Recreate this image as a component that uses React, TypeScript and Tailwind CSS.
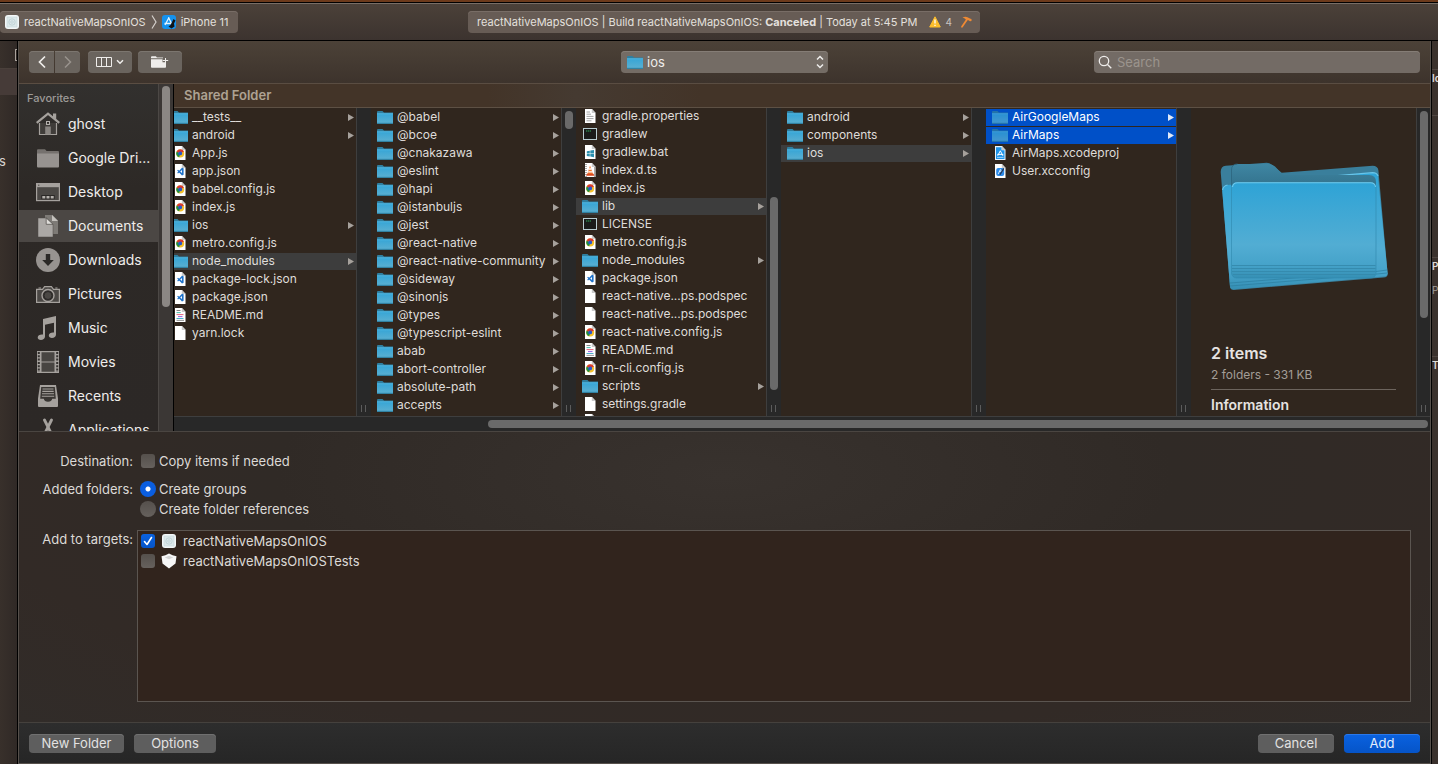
import type { ReactNode } from "react";
import { clsx } from "clsx";

type Kind =
  | "folder"
  | "chrome"
  | "code"
  | "text"
  | "plain"
  | "props"
  | "exec"
  | "windows"
  | "media"
  | "xcode"
  | "config";

type Entry = { name: string; kind: Kind; state?: "open" | "selected" };

const f = (name: string, kind: Kind = "folder", state?: Entry["state"]): Entry => ({ name, kind, state });

const rootFiles: Entry[] = [
  f("__tests__"),
  f("android"),
  f("App.js", "chrome"),
  f("app.json", "code"),
  f("babel.config.js", "chrome"),
  f("index.js", "chrome"),
  f("ios"),
  f("metro.config.js", "chrome"),
  f("node_modules", "folder", "open"),
  f("package-lock.json", "code"),
  f("package.json", "code"),
  f("README.md", "text"),
  f("yarn.lock", "plain"),
];

const moduleFiles: Entry[] = [
  "@babel",
  "@bcoe",
  "@cnakazawa",
  "@eslint",
  "@hapi",
  "@istanbuljs",
  "@jest",
  "@react-native",
  "@react-native-community",
  "@sideway",
  "@sinonjs",
  "@types",
  "@typescript-eslint",
  "abab",
  "abort-controller",
  "absolute-path",
  "accepts",
].map((name) => f(name));

const mapsFiles: Entry[] = [
  f("gradle.properties", "props"),
  f("gradlew", "exec"),
  f("gradlew.bat", "windows"),
  f("index.d.ts", "media"),
  f("index.js", "chrome"),
  f("lib", "folder", "open"),
  f("LICENSE", "exec"),
  f("metro.config.js", "chrome"),
  f("node_modules"),
  f("package.json", "code"),
  f("react-native...ps.podspec", "plain"),
  f("react-native...ps.podspec", "plain"),
  f("react-native.config.js", "chrome"),
  f("README.md", "text"),
  f("rn-cli.config.js", "chrome"),
  f("scripts"),
  f("settings.gradle", "plain"),
];

const libFiles: Entry[] = [f("android"), f("components"), f("ios", "folder", "open")];

const iosFiles: Entry[] = [
  f("AirGoogleMaps", "folder", "selected"),
  f("AirMaps", "folder", "selected"),
  f("AirMaps.xcodeproj", "xcode"),
  f("User.xcconfig", "config"),
];

function FolderIcon({ dim = false }: { dim?: boolean }) {
  return (
    <svg viewBox="0 0 16 16" className={clsx("size-4 shrink-0", dim && "opacity-75")} aria-hidden="true">
      <defs>
        <linearGradient id="folderFace" x1="0" y1="0" x2="0" y2="1">
          <stop offset="0" stopColor="#36a5d6" />
          <stop offset="0.8" stopColor="#55aed2" />
          <stop offset="1" stopColor="#3d93b6" />
        </linearGradient>
      </defs>
      <path d="M0 3q0-1 1-1h4.5l1.500 1.500h9V6H0z" fill="#2f7fa0" />
      <path d="M0 4.500h16V15H0z" fill="url(#folderFace)" />
      <path d="M0 4.500h16v.7H0z" fill="#5cc0e8" />
      <path d="M0 14.200h16v.8H0z" fill="#2f7c9b" />
    </svg>
  );
}

function Page({ children, fill = "#ffffff" }: { children?: ReactNode; fill?: string }) {
  return (
    <svg viewBox="0 0 16 16" className="size-4 shrink-0" aria-hidden="true">
      <path d="M3 1h7l3.500 3.800V15H3z" fill={fill} />
      <path d="M9.800 1v4h3.700z" fill="#c9c9c9" />
      {children}
    </svg>
  );
}

function FileIcon({ kind, dim }: { kind: Kind; dim: boolean }) {
  switch (kind) {
    case "folder":
      return <FolderIcon dim={dim} />;
    case "chrome":
      return (
        <Page>
          <circle cx="8.200" cy="8.400" r="4" fill="#f5c12a" />
          <path d="M8.200 8.400 7.200 12.300A4 4 0 0 1 4.700 6.500z" fill="#1f8f45" />
          <path d="M8.200 8.400 4.700 6.500a4 4 0 0 1 7.200.1z" fill="#d93a2e" />
          <circle cx="8.200" cy="8.400" r="1.900" fill="#2558cf" />
        </Page>
      );
    case "code":
      return (
        <Page>
          <path d="M11.600 5.200v6.600L10 12.400 5.200 7.400l.8-.7 4 3.200V7l-4 3.400-.8-.7L10 4.700z" fill="#1f72c9" />
        </Page>
      );
    case "text":
      return (
        <Page>
          <path d="M4.500 3.500h4" stroke="#777" strokeWidth=".9" />
          <path d="M4.500 5.600h4.200" stroke="#38b5a6" strokeWidth=".9" />
          <path d="M4.500 7.600h7" stroke="#e0516a" strokeWidth=".9" />
          <path d="M6 9.600h4.500" stroke="#8a4fe0" strokeWidth=".9" />
          <path d="M4.500 11.500h7" stroke="#38a5c6" strokeWidth=".9" />
          <path d="M4.500 13.400h7.500" stroke="#888" strokeWidth=".9" />
        </Page>
      );
    case "props":
      return (
        <Page>
          <path d="M4.500 4h3.500M4.500 6.200h4.500M4.500 8.400h7M4.500 10.600h7M4.500 12.800h5" stroke="#9a9a9a" strokeWidth=".9" />
        </Page>
      );
    case "windows":
      return (
        <Page>
          <path d="m4.800 7.200 3-.5v2.600h-3zM8.300 6.600l3.700-.6v3.300H8.300zM4.800 9.800h3v2.700l-3-.5zM8.300 9.800H12v3.400l-3.700-.6z" fill="#2a8fae" />
        </Page>
      );
    case "media":
      return (
        <Page>
          <path d="M4 2v13M12.500 5.500V15" stroke="#555" strokeWidth="1" strokeDasharray="1 1" />
          <path d="M8 3.500 5.400 12h5.600z" fill="#f0742b" />
          <path d="M7.200 6.300h2l.4 1.400H6.800zM6.300 9.200h3.900l.4 1.200H6z" fill="#fff" />
          <path d="M4.800 11.800h6.800l.6 2H4.200z" fill="#d9481d" />
        </Page>
      );
    case "xcode":
      return (
        <Page fill="#e8f5ff">
          <path d="M4 2.200h5.500v3h3V14H4z" fill="#1f95ea" />
          <path d="m8.300 5.800-2.600 5M8.300 5.800l2.600 5M5.300 9.400h6" stroke="#fff" strokeWidth="1" fill="none" />
          <path d="M5 12.400h6.500" stroke="#bfe3ff" strokeWidth=".8" />
        </Page>
      );
    case "config":
      return (
        <Page>
          <rect x="4.200" y="5" width="8" height="8" rx="2" fill="#2c8bea" />
          <path d="m6.200 11 2.200-4.600M7 8.400h3.500M8.400 6.400l1 2" stroke="#dff0ff" strokeWidth=".9" />
          <path d="m7.300 11.600 4-6.600 1.200.7-4 6.400z" fill="#20385c" />
        </Page>
      );
    case "exec":
      return (
        <svg viewBox="0 0 16 16" className="size-4 shrink-0" aria-hidden="true">
          <rect x="1" y="2" width="14" height="12" fill="#b9cdd2" />
          <rect x="2" y="3" width="12" height="10" fill="#1a1b1a" />
          <path d="M4 5h5" stroke="#2fae5c" strokeWidth="1" strokeDasharray="1.400 .6" />
        </svg>
      );
    default:
      return <Page />;
  }
}

function FileRow({ entry }: { entry: Entry }) {
  const selected = entry.state === "selected";
  return (
    <li className="pt-px">
      <button
        type="button"
        className={clsx(
          "flex h-[17px] w-full items-start gap-1 pr-0.5 pl-1.5 text-left text-xs leading-4 whitespace-nowrap",
          selected && "bg-[#0050c8] text-white",
          entry.state === "open" && "bg-[#3d3d3d] text-[#dfdddb]",
          !entry.state && "text-[#dfdcd9]",
        )}
      >
        <FileIcon kind={entry.kind} dim={selected} />
        <span className="flex-1">{entry.name}</span>
        {entry.kind === "folder" && (
          <svg
            viewBox="0 0 6 7"
            className={clsx("h-[7px] w-1.5 self-center", selected ? "text-[#dfe8f8]" : "text-[#a6a19c]")}
            aria-hidden="true"
          >
            <path d="M0 0v7l6-3.500z" fill="currentColor" />
          </svg>
        )}
      </button>
    </li>
  );
}

function Gutter({ thumb, last = false }: { thumb?: string; last?: boolean }) {
  return (
    <div
      className={clsx(
        "flex shrink-0 flex-col border-l border-[#3e3e3e] bg-[#282828] pt-[3px] pb-1 pl-[3px]",
        last ? "w-3.5" : "w-[15px]",
      )}
    >
      <div className="flex-1">{thumb && <div className={clsx("w-2 rounded-full bg-[#6a6a6a]", thumb)} />}</div>
      <div className="ml-px h-[7px] w-[5px] border-x border-[#5c5c5c]" />
    </div>
  );
}

type ColumnProps = { label: string; entries: Entry[]; thumb?: string; scrolled?: boolean };

function Column({ label, entries, thumb, scrolled = false }: ColumnProps) {
  return (
    <div className="flex w-[205px] shrink-0">
      <div className="flex-1 overflow-hidden">
        <ul aria-label={label} className={clsx(scrolled && "-mt-px")}>
          {entries.map((entry, i) => (
            <FileRow key={i} entry={entry} />
          ))}
          {scrolled && (
            <li className="pl-1.5">
              <Page />
            </li>
          )}
        </ul>
      </div>
      <Gutter thumb={thumb} />
    </div>
  );
}

const sidebarIcons: Record<string, ReactNode> = {
  ghost: (
    <>
      <path d="M3.500 11v11.500h17V11" fill="#403d3a" stroke="#a5a19d" strokeWidth="1.200" />
      <path d="M17 1.500h3.200v6.200L17 5z" fill="#a5a19d" />
      <path d="M.7 10.800 12 1.600l11.300 9.200" fill="none" stroke="#a5a19d" strokeWidth="2.200" />
      <rect x="10.500" y="9.500" width="3" height="3" fill="none" stroke="#b5b1ad" />
      <path d="M9.200 14.500h5.600v8H9.200z" fill="#8a8682" />
    </>
  ),
  "Google Dri...": (
    <>
      <path d="M1 4.300q0-1 1-1h7l1.600 1.700H22q1 0 1 1V8H1z" fill="#75716e" />
      <path d="M1 7.500h22v13q0 1-1 1H2q-1 0-1-1z" fill="#979390" />
    </>
  ),
  Desktop: (
    <>
      <rect x=".6" y="3.600" width="22.800" height="17" fill="#4b4845" stroke="#a5a19d" strokeWidth="1.200" />
      <path d="M.6 3.400h22.800v3.800H.6z" fill="#a5a19d" />
      <path d="M2 5.200h1.400" stroke="#4b4845" />
      <path d="M5.300 15h13.400v4.200H5.300z" fill="#2a2826" />
      <path d="M6.300 16h3v2.600h-3zM10.500 16h3v2.600h-3zM14.700 16h3v2.600h-3z" fill="#b5b1ad" />
    </>
  ),
  Documents: (
    <>
      <path d="M9 1h7.500L22 6.500V20H9z" fill="#7d7a76" />
      <path d="M16 1v6h6z" fill="#c4c1bd" />
      <path d="M2 4h8.500L17 10v13H2z" fill="#aba8a5" stroke="#4d4a46" strokeWidth=".5" />
      <path d="M10.200 4v6.300H17z" fill="#dddbd8" stroke="#4d4a46" strokeWidth=".7" />
    </>
  ),
  Downloads: (
    <>
      <circle cx="12" cy="12" r="12" fill="#979390" />
      <path d="M9.800 6h4.400v6h3.600L12 18 6.200 12h3.600z" fill="#2b2927" />
    </>
  ),
  Pictures: (
    <>
      <path d="M.6 7.400h5.900L8.600 4.600h6.800l2.100 2.800h5.900v13H.6z" fill="#4b4845" stroke="#a5a19d" strokeWidth="1.200" />
      <path d="M2.500 6h2.600M19.300 6h2.200" stroke="#a5a19d" strokeWidth="1.200" />
      <circle cx="12" cy="13.500" r="6" fill="#34312f" stroke="#a5a19d" strokeWidth="1.400" />
      <circle cx="12" cy="13.500" r="4" fill="#4a4744" stroke="#2a2826" />
    </>
  ),
  Music: (
    <path
      d="M7 3 20 0v18.500c0 2.200-1.800 3.500-4 3.500-1.900 0-3.200-.9-3.200-2.400 0-2.300 2.400-3.300 5.200-3V6.800L9 8.800V20.500C9 22.800 7 24 4.900 24 3 24 1.700 23 1.700 21.600c0-2.300 2.300-3.300 5.300-3z"
      fill="#a5a19d"
    />
  ),
  Movies: (
    <>
      <path d="M1 1h22v22H1z" fill="#a5a19d" />
      <path d="M5.500 2.200h13v9.200h-13zM5.500 12.600h13v9.200h-13z" fill="#484542" />
      <path d="M2.800 2v20M21.200 2v20" stroke="#34312f" strokeWidth="2" strokeDasharray="2 1.300" />
    </>
  ),
  Recents: (
    <>
      <path d="M4 1h16l2 13.500V22q0 1-1 1H3q-1 0-1-1v-7.500z" fill="#a5a19d" />
      <path d="M5.200 3h13.600l1 11.800h-3.600q-.5 3-4.200 3t-4.200-3H4.200z" fill="#393633" />
      <path d="M6.500 5h11M6.300 7.400h11.400M6 9.800h12M5.800 12.200h12.400" stroke="#a5a19d" strokeWidth="1.100" />
    </>
  ),
  Applications: (
    <>
      <path d="M8.500 2 19 23" stroke="#a5a19d" strokeWidth="2.800" strokeLinecap="round" />
      <path d="M15.500 2 5 23" stroke="#a5a19d" strokeWidth="2.800" strokeLinecap="round" />
      <path d="M2 17.500h20" stroke="#a5a19d" strokeWidth="2.500" />
    </>
  ),
};

function Sidebar() {
  return (
    <aside className="flex w-[155px] shrink-0 border-r border-black bg-[linear-gradient(180deg,#32302e,#2d2926_30%,#2c2826)]">
      <nav className="flex-1 overflow-hidden" aria-label="Favorites">
        <h2 className="flex h-[23px] items-end px-2 pb-px text-[11px] leading-4 font-medium text-[#9d9a97]">Favorites</h2>
        <ul>
          {Object.entries(sidebarIcons).map(([name, icon]) => (
            <li key={name} className="py-px">
              <button
                type="button"
                className={clsx(
                  "flex h-8 w-full items-center gap-2 pl-[17px] text-left text-sm whitespace-nowrap text-[#efedeb]",
                  name === "Documents" && "bg-[#4b4744]",
                )}
              >
                <svg viewBox="0 0 24 24" className="size-6 shrink-0" aria-hidden="true">
                  {icon}
                </svg>
                {name}
              </button>
            </li>
          ))}
        </ul>
      </nav>
      <div className="w-[15px] border-l border-[#4c4845] bg-[#3b3735] px-[3px] pt-0.5">
        <div className="h-[221px] w-2 rounded-full bg-[#8b8784]" />
      </div>
    </aside>
  );
}

function FolderStack() {
  return (
    <svg viewBox="0 0 170 130" className="h-[130px] w-[170px]" aria-hidden="true">
      <defs>
        <linearGradient id="stackFace" x1="0" y1="0" x2="0" y2="1">
          <stop offset="0" stopColor="#2ea3d6" />
          <stop offset="0.65" stopColor="#52add3" />
          <stop offset="0.86" stopColor="#46a3ca" />
          <stop offset="1" stopColor="#358fb4" />
        </linearGradient>
        <linearGradient id="stackTab" x1="0" y1="0" x2="0" y2="1">
          <stop offset="0" stopColor="#3f86a3" />
          <stop offset="1" stopColor="#32718b" />
        </linearGradient>
      </defs>
      <path
        d="M1.700 10q0-5.700 5-6.300l41-3q3 0 5 2l10 8 91-7q5 0 5.700 4.500l9.300 104q0 3-4 3.400l-150 12.300q-3.200 0-3.700-3z"
        fill="#3a7f9c"
      />
      <path
        d="M3.300 29q0-5 5-6l145-12.300q5 0 5.700 4.500l9.600 96q0 3-4 3.400l-150 12.700q-3.200 0-3.600-3z"
        fill="url(#stackFace)"
      />
      <path d="M3.600 28q.5-4 4.900-5M64 18.300l89.500-7.600q4.500 0 5.500 3.500" fill="none" stroke="#68c5ea" strokeWidth="1.200" />
      <path d="m11 121 146-11.500 11-1.500M11 124l147-12 10-1" fill="none" stroke="#2e81a3" strokeWidth=".8" />
      <path d="M12.500 24V8q0-6 6-6H49q4 0 7 2.500l8 8.500h86q7 0 7 7v6z" fill="url(#stackTab)" />
      <path d="M12.500 24V8q0-6 6-6" fill="none" stroke="#2c657d" strokeWidth=".8" />
      <rect x="12.500" y="20.500" width="144.500" height="95.500" rx="5" fill="url(#stackFace)" stroke="#2f88ac" strokeWidth=".6" />
      <path d="M13.500 25q.5-4.200 5-4.200h133q4.500 0 5 4.200" fill="none" stroke="#70cbee" strokeWidth="1.100" />
      <path d="M13 103.500h143.500M13 106.500h143.500M13 109.500h143.500M14 112.500h142" stroke="#3489ac" strokeWidth=".9" />
    </svg>
  );
}

function AppGlyph() {
  return (
    <svg viewBox="0 0 14 14" className="size-3.5 shrink-0" aria-hidden="true">
      <rect width="14" height="14" rx="3" fill="#f3f7f8" />
      <rect x="2" y="2" width="10" height="10" fill="#dde8ea" stroke="#c4d6da" strokeWidth=".6" />
      <circle cx="7" cy="7" r="3.200" fill="none" stroke="#b5cbd0" strokeWidth=".7" />
      <circle cx="7" cy="7" r="1.300" fill="none" stroke="#b5cbd0" strokeWidth=".6" />
    </svg>
  );
}

function TestGlyph() {
  return (
    <svg viewBox="0 0 16 16" className="-mx-px size-4 shrink-0" aria-hidden="true">
      <path d="M8 .5q3.500 2 7.500 2.800l-1 7.200L8 15.500 1.500 10.500l-1-7.200Q4.500 2.500 8 .5z" fill="#f6f6f6" />
      <path d="m8 2.800 4.200 1.700L8 6.300 3.800 4.500z" fill="#d4d4d4" />
    </svg>
  );
}

const toolButton =
  "flex h-[22px] items-center justify-center rounded bg-[#6a645e] text-[#efedeb] shadow-[inset_0_1px_0_#7c766f]";
const footerButton = "h-[19px] rounded text-[13px] leading-[18px]";
const grayButton = "bg-[#5e5e5e] text-[#e2e2e2] shadow-[inset_0_1px_0_#707070]";

function Check({ id, checked }: { id: string; checked?: boolean }) {
  return (
    <span className="grid size-3.5 shrink-0 place-items-center">
      <input
        id={id}
        type="checkbox"
        defaultChecked={checked}
        className="peer col-start-1 row-start-1 size-3.5 appearance-none rounded-[3px] bg-[linear-gradient(#55504c,#66615d)] checked:bg-[linear-gradient(#0a62e0,#0554c8)]"
      />
      <svg
        viewBox="0 0 14 14"
        className="pointer-events-none invisible col-start-1 row-start-1 size-3.5 peer-checked:visible"
        aria-hidden="true"
      >
        <path d="m3.500 7.500 2.500 3 4.500-7" fill="none" stroke="#fff" strokeWidth="1.600" strokeLinecap="round" strokeLinejoin="round" />
      </svg>
    </span>
  );
}

function Radio({ id, checked }: { id: string; checked?: boolean }) {
  return (
    <input
      id={id}
      type="radio"
      name="added-folders"
      defaultChecked={checked}
      className="-mx-px size-4 shrink-0 appearance-none rounded-full bg-[linear-gradient(#55504c,#66615d)] checked:bg-[radial-gradient(circle,#ffffff_0_2px,#0a5ee0_3px)]"
    />
  );
}

function Toolbar() {
  return (
    <div className="grid h-[43px] shrink-0 grid-cols-[1fr_207px_1fr] items-center border-b border-[#5a4d42] bg-[linear-gradient(180deg,#4c4238,#3d332c)] px-2.5">
      <div className="flex gap-1.5">
        <div className="flex gap-px pr-0.5">
          <button type="button" aria-label="Back" className={clsx(toolButton, "w-[25px] rounded-r-none")}>
            <svg viewBox="0 0 10 14" className="h-3.5 w-2.5" fill="none" stroke="currentColor" strokeWidth="1.700" aria-hidden="true">
              <path d="M8 1.500 2.500 7 8 12.500" />
            </svg>
          </button>
          <button type="button" aria-label="Forward" className={clsx(toolButton, "w-[25px] rounded-l-none")}>
            <svg viewBox="0 0 10 14" className="h-3.5 w-2.5 text-[#99938d]" fill="none" stroke="currentColor" strokeWidth="1.500" aria-hidden="true">
              <path d="M2 1.500 7.500 7 2 12.500" />
            </svg>
          </button>
        </div>
        <button type="button" aria-label="Column view" className={clsx(toolButton, "w-11 gap-1")}>
          <svg viewBox="0 0 16 10" className="h-2.5 w-4" fill="none" stroke="currentColor" aria-hidden="true">
            <path d="M.5.5h15v9H.5zM5.500.5v9M10.500.5v9" />
          </svg>
          <svg viewBox="0 0 8 6" className="h-1.5 w-2" fill="none" stroke="currentColor" strokeWidth="1.500" aria-hidden="true">
            <path d="m1 1.200 3 3 3-3" />
          </svg>
        </button>
        <button type="button" aria-label="New folder with selection" className={clsx(toolButton, "w-11")}>
          <svg viewBox="0 0 18 12" className="h-3 w-[18px]" fill="currentColor" aria-hidden="true">
            <path d="M0 1.200Q0 .3.900.3h4l1 1.200H12V2.300H0z" />
            <path d="M0 3.200h11.500v3h3.500V11q0 .8-.9.800H.9q-.9 0-.9-.8z" />
            <path d="M14 2h1v2h2.200v1H15v2h-1V5h-2.200V4H14z" />
          </svg>
        </button>
      </div>
      <div className="relative">
        <select
          aria-label="Current folder"
          className="block h-[22px] w-full appearance-none rounded bg-[#746c65] pl-[26px] text-[13px] leading-5 text-[#efedeb] shadow-[inset_0_1px_0_#857d76]"
        >
          <option>ios</option>
        </select>
        <span className="pointer-events-none absolute top-[3px] left-1.5">
          <FolderIcon />
        </span>
        <svg viewBox="0 0 8 14" className="pointer-events-none absolute top-1 right-1 h-3.5 w-2" fill="none" stroke="#efedeb" strokeWidth="1.500" aria-hidden="true">
          <path d="m1 4.500 3-3 3 3M1 9.500l3 3 3-3" />
        </svg>
      </div>
      <div className="relative w-[326px] justify-self-end">
        <input
          type="search"
          aria-label="Search"
          placeholder="Search"
          className="block h-[22px] w-full rounded bg-[#736b65] pl-[23px] text-[13px] text-white shadow-[inset_0_1px_0_#857d76] placeholder:text-[#9b948d]"
        />
        <svg viewBox="0 0 14 14" className="pointer-events-none absolute top-1 left-1 size-3.5" fill="none" stroke="#efedeb" strokeWidth="1.300" aria-hidden="true">
          <circle cx="6" cy="6" r="4.700" />
          <path d="m9.500 9.500 3.800 3.800" />
        </svg>
      </div>
    </div>
  );
}

function Browser() {
  return (
    <div className="flex h-[348px] shrink-0 border-b border-[#4a4541]">
      <Sidebar />
      <div className="flex min-w-0 flex-1 flex-col">
        <h2 className="h-6 shrink-0 border-b border-[#5d5044] bg-[linear-gradient(90deg,#433428,#433428_25%,#453a31_32%,#433428_42%)] pl-2.5 text-[13px] leading-[23px] font-semibold text-[#aea293]">
          Shared Folder
        </h2>
        <div className="flex min-h-0 flex-1 overflow-hidden bg-[#30261e]">
          <div className="-ml-2 flex min-w-0 flex-1">
            <Column label="Project" entries={rootFiles} />
            <Column label="node_modules" entries={moduleFiles} thumb="h-[18px]" />
            <Column label="react-native-maps" entries={mapsFiles} thumb="mt-[86px] h-[193px]" scrolled />
            <Column label="lib" entries={libFiles} />
            <Column label="ios" entries={iosFiles} />
            <section className="flex min-w-0 flex-1 flex-col overflow-hidden px-5 pt-[54px] whitespace-nowrap" aria-label="Preview">
              <div className="flex h-[181px] justify-center">
                <FolderStack />
              </div>
              <p className="text-base leading-5 font-semibold text-[#e6e3e1]">2 items</p>
              <p className="mt-[3px] border-b border-[#6c645d] pb-[5px] text-xs leading-[18px] text-[#a39d97]">2 folders - 331 KB</p>
              <h3 className="mt-[5px] text-sm leading-5 font-semibold text-[#e6e3e1]">Information</h3>
            </section>
            <Gutter thumb="h-[207px]" last />
          </div>
        </div>
        <div className="flex h-[15px] shrink-0 justify-end border-t border-[#3e3e3e] bg-[#282828] pt-[3px] pr-0.5">
          <div className="h-2 w-3/4 rounded-full bg-[#6a6a6a]" />
        </div>
      </div>
    </div>
  );
}

function Options() {
  const label = "w-[114px] shrink-0 text-right";
  return (
    <form className="flex flex-1 flex-col bg-[radial-gradient(ellipse_at_50%_15%,#38322e,#302a26_45%,#322a26_75%,#312c29)] pt-[19px] pr-[19px] pb-5 text-[13px] leading-5 text-[#dcd9d6]">
      <div className="flex gap-2">
        <span className={label}>Destination:</span>
        <div className="flex items-center gap-1">
          <Check id="copy" />
          <label htmlFor="copy">Copy items if needed</label>
        </div>
      </div>
      <div className="mt-2 flex gap-2">
        <span className={label}>Added folders:</span>
        <div>
          <div className="flex items-center gap-1">
            <Radio id="groups" checked />
            <label htmlFor="groups">Create groups</label>
          </div>
          <div className="flex items-center gap-1">
            <Radio id="references" />
            <label htmlFor="references">Create folder references</label>
          </div>
        </div>
      </div>
      <div className="mt-2.5 flex flex-1 gap-1">
        <span className={label}>Add to targets:</span>
        <ul className="mt-px flex-1 border border-[#5b5550] bg-[#31241d] pl-[3px]">
          <li className="flex items-center gap-[7px]">
            <Check id="app" checked />
            <AppGlyph />
            <label htmlFor="app">reactNativeMapsOnIOS</label>
          </li>
          <li className="flex items-center gap-[7px]">
            <Check id="tests" />
            <TestGlyph />
            <label htmlFor="tests">reactNativeMapsOnIOSTests</label>
          </li>
        </ul>
      </div>
    </form>
  );
}

function TitleBar() {
  const pill =
    "flex h-[22px] items-center rounded bg-[#675c55] text-[11px] whitespace-nowrap text-[#e4e0dd] shadow-[inset_0_1px_0_#786d66]";
  return (
    <header className="shrink-0 border-t-2 border-[#6c3a1b]">
      <div className="border-y border-black">
        <div className="grid h-[37px] grid-cols-[1fr_512px_1fr] items-center border-t border-[#786e66] bg-[linear-gradient(180deg,#4b4139,#3c332f)] pl-2.5">
          <div className={clsx(pill, "-ml-2.5 w-[238px] gap-[5px] pl-[5px]")}>
            <AppGlyph />
            <span>reactNativeMapsOnIOS</span>
            <svg viewBox="0 0 6 14" className="h-3.5 w-1.5" fill="none" stroke="#d5d0cc" strokeWidth="1.200" aria-hidden="true">
              <path d="M1 .5 5 7l-4 6.500" />
            </svg>
            <svg viewBox="0 0 14 14" className="size-3.5" aria-hidden="true">
              <rect width="14" height="14" rx="3" fill="#1592ee" />
              <path d="m7 2.500-4 7.500M6.500 2.500l3.500 7M2.500 8.500h9" stroke="#e6f5ff" strokeWidth="1.300" />
              <path d="m11.500 4 2 1.500-1.500 3 .5 3-3 2-3-2 2-1.500z" fill="#101418" />
            </svg>
            <span>iPhone 11</span>
          </div>
          <div className={clsx(pill, "pl-[9px]")}>
            <span>
              reactNativeMapsOnIOS | Build reactNativeMapsOnIOS: <strong className="font-bold">Canceled</strong> | Today at 5:45 PM
            </span>
            <svg viewBox="0 0 12 12" className="ml-3 size-3" aria-hidden="true">
              <path d="M6 .8 11.300 11H.7z" fill="#fbbd2c" stroke="#fbbd2c" strokeWidth="1" strokeLinejoin="round" />
              <path d="M6 3.500v4M6 8.700v1.300" stroke="#fff" strokeWidth="1.300" />
            </svg>
            <span className="ml-1 text-[10px] text-[#c9c4c0]">4</span>
            <svg viewBox="0 0 12 12" className="ml-2 size-3" aria-hidden="true">
              <path d="M2.500 1.600Q5 .2 7.500 1.200l3 1.600 1 .2v2l-1.500.3-2-1.300-1.500.2Q5 2.300 2.500 1.600z" fill="#ef8a34" />
              <path d="M7 3.500 2 10.700" stroke="#ef8a34" strokeWidth="1.800" strokeLinecap="round" />
            </svg>
          </div>
        </div>
      </div>
    </header>
  );
}

export default function App() {
  return (
    <div className="flex h-screen flex-col overflow-hidden bg-[#2e2623] font-['Inter',sans-serif]">
      <TitleBar />
      <div className="flex min-h-0 flex-1">
        <div className="flex w-[17px] shrink-0 flex-col overflow-hidden bg-[linear-gradient(90deg,#38302b,#302926)] text-[13px] leading-4 text-[#d8d4d0]">
          <div className="flex h-7 items-center justify-end border-b border-[#4a403b]">
            <div className="h-3 w-0.5 border-y border-l border-[#a9a29c]" />
          </div>
          <div className="h-[26px] bg-[#463b38]" />
          <p className="mt-[58px] -ml-px">s</p>
        </div>
        <main className="flex min-w-0 flex-1 flex-col border-x border-black">
          <div className="flex min-h-0 flex-1 flex-col border-x border-b border-[#56504b]">
            <Toolbar />
            <Browser />
            <Options />
            <footer className="flex h-[41px] shrink-0 items-center gap-2.5 border-t border-[#45413d] bg-[linear-gradient(180deg,#2d2d2d,#262626)] px-2.5">
              <button type="button" className={clsx(footerButton, grayButton, "w-[95px]")}>
                New Folder
              </button>
              <button type="button" className={clsx(footerButton, grayButton, "w-[82px]")}>
                Options
              </button>
              <span className="flex-1" />
              <button type="button" className={clsx(footerButton, grayButton, "w-[76px]")}>
                Cancel
              </button>
              <button
                type="submit"
                className={clsx(
                  footerButton,
                  "w-[76px] bg-[linear-gradient(#0a62e0,#0554c8)] text-[#e6eefb] shadow-[inset_0_1px_0_#2a78ea]",
                )}
              >
                Add
              </button>
            </footer>
          </div>
        </main>
        <div className="w-1.5 shrink-0 overflow-hidden bg-[#3a312c] text-[10px] leading-4 font-semibold text-[#e0dcd8]">
          <p className="mt-7 border-t border-[#4f4540]">Id</p>
          <div className="mt-[29px] h-[142px] border-t border-[#4f4540]" />
          <p className="border-t border-[#4f4540]">P</p>
          <p className="mt-2 font-normal text-[#a39d97]">P</p>
          <p className="mt-[58px] border-t border-[#4f4540]">Te</p>
        </div>
      </div>
    </div>
  );
}
